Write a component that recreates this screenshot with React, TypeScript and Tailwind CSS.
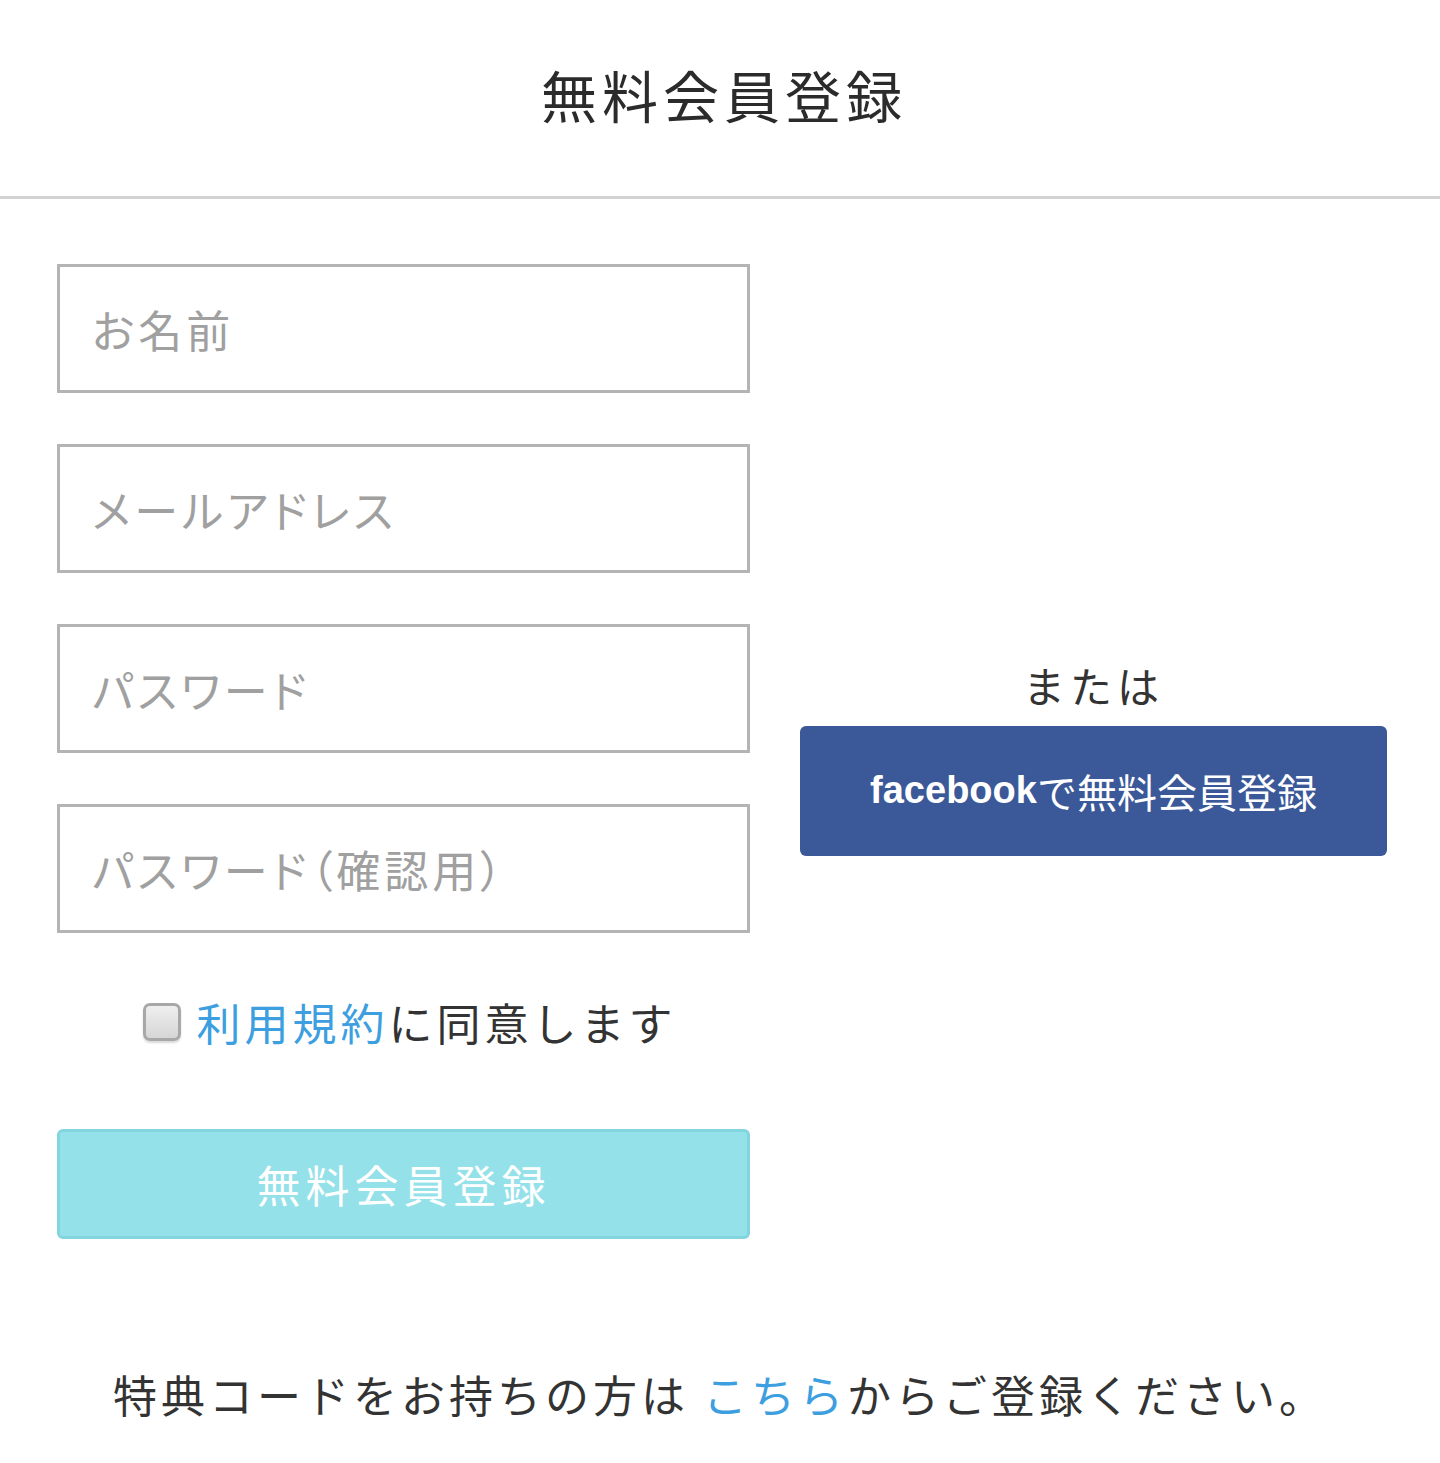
export default function App() {
  const fields = ['お名前', 'メールアドレス', 'パスワード', 'パスワード（確認用）']

  return (
    <div className="min-h-[1463px] w-[1440px] bg-white text-[#333] font-['Noto_Sans_CJK_JP','Liberation_Sans',sans-serif]">
      {/* Header */}
      <header className="flex h-[199px] items-center justify-center border-b-[3px] border-[#d2d2d2]">
        <h1 className="pb-[8px] pl-[8px] text-[56px] font-normal leading-[64px] tracking-[5px] text-[#2b2b2b]">
          無料会員登録
        </h1>
      </header>

      <main className="flex items-center gap-[50px] pl-[57px] pr-[53px] pt-[65px]">
        {/* Form */}
        <div className="flex w-[693px] shrink-0 flex-col">
          <div className="flex flex-col gap-[51px]">
            {fields.map((f) => (
              <input
                key={f}
                type="text"
                placeholder={f}
                className="h-[129px] w-full border-[3px] border-[#b4b4b4] bg-white pl-[32px] text-[44px] tracking-[4px] text-[#333] outline-none [font-feature-settings:'palt'] placeholder:text-[#a0a0a0]"
              />
            ))}
          </div>

          <label className="mt-[66px] flex items-center justify-center gap-[16px] pl-[12px]">
            <input
              type="checkbox"
              className="h-[38px] w-[38px] appearance-none rounded-[7px] border-[3px] border-[#a8a8a8] bg-gradient-to-b from-[#efefef] to-[#d6d6d6] shadow-[0_2px_2px_rgba(0,0,0,0.15)]"
            />
            <span className="text-[44px] leading-[46px] tracking-[4px]">
              <span className="text-[#3d9fe0]">利用規約</span>に同意します
            </span>
          </label>

          <button className="mt-[84px] h-[110px] w-full rounded-[6px] border-[3px] border-[#82d4de] bg-[#95e1e9] text-[44px] tracking-[5px] text-white">
            無料会員登録
          </button>
        </div>

        {/* Facebook */}
        <div className="flex w-[587px] shrink-0 flex-col items-center pt-[12px]">
          <p className="text-[42px] leading-[50px] tracking-[5px] text-[#333]">または</p>
          <button className="mt-[16px] flex h-[130px] w-full items-center justify-center rounded-[6px] bg-[#3b5998] text-[40px] text-white">
            <span className="font-['Liberation_Sans'] text-[38px] font-bold">facebook</span>
            <span>で無料会員登録</span>
          </button>
        </div>
      </main>

      <p className="mt-[130px] text-center text-[44px] leading-[50px] tracking-[4px] text-[#333]">
        特典コードをお持ちの方は <span className="text-[#3d9fe0]">こちら</span>からご登録ください。
      </p>
    </div>
  )
}
